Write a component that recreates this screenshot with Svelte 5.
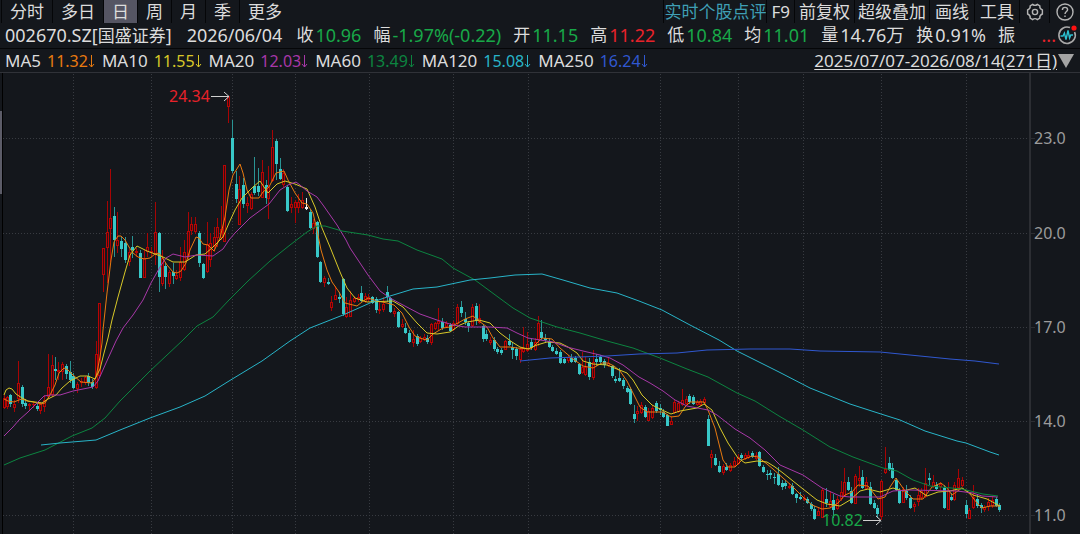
<script lang="ts">
  type Candle = [number, number, number, number, number, string];

  const periods = ['分时', '多日', '日', '周', '月', '季', '更多'];
  let period = $state('日');

  const quotes = [
    { label: '收', value: '10.96', tone: 'down' },
    { label: '幅', value: '-1.97%(-0.22)', tone: 'down' },
    { label: '开', value: '11.15', tone: 'down' },
    { label: '高', value: '11.22', tone: 'up' },
    { label: '低', value: '10.84', tone: 'down' },
    { label: '均', value: '11.01', tone: 'down' },
    { label: '量', value: '14.76万', tone: '' },
    { label: '换', value: '0.91%', tone: '' },
    { label: '振', value: '', tone: '' }
  ];

  const averages = [
    { name: 'MA5', value: '11.32', cls: 'ma5', points: '4,399 8,401 14,402 19,400 22,399 27,401 33,402 41,404 45,403 50,395 55,385 59,373 64,368 68,370 73,375 81,382 92,383 96,377 100,357 102,343 103,330 107,293 111,260 114,242 118,236 121,236 125,240 129,247 133,253 138,257 144,259 150,258 155,254 159,253 162,257 167,265 173,272 177,273 181,271 186,263 190,250 196,237 199,238 203,244 208,245 214,251 220,238 225,217 229,190 233,175 240,164 243,173 247,190 251,198 259,198 263,192 269,187 276,173 284,171 288,180 295,193 302,203 307,204 313,213 317,230 321,250 327,270 332,282 339,292 345,303 357,306 362,302 368,298 377,301 387,303 394,305 402,313 409,327 415,336 423,339 427,340 433,334 443,328 450,327 458,323 465,319 473,316 479,321 487,327 493,338 500,347 510,347 517,348 531,349 537,343 542,338 552,339 560,348 573,359 583,366 593,368 602,363 608,363 614,366 620,371 627,381 633,393 640,407 647,412 657,412 663,412 671,417 679,416 685,407 690,402 704,402 708,410 715,428 723,460 728,467 735,467 742,460 752,456 758,457 767,464 773,469 783,478 792,486 803,497 812,505 822,509 830,508 838,503 845,495 852,492 858,485 868,486 878,499 885,497 890,487 896,478 905,491 913,499 923,499 932,487 941,483 947,488 952,495 962,488 970,494 977,503 982,508 990,506 1000,506' },
    { name: 'MA10', value: '11.55', cls: 'ma10', points: '4,395 6,390 9,388 12,389 16,394 22,398 28,401 42,403 48,399 56,395 62,388 70,381 80,376 88,376 95,379 100,369 104,353 108,338 112,320 118,297 125,272 130,255 137,246 147,251 155,254 163,257 173,262 185,262 196,255 205,254 213,247 223,237 229,223 235,210 242,198 252,188 260,181 268,193 277,184 285,181 295,184 307,189 315,207 322,228 330,247 340,272 347,288 355,298 367,302 393,301 403,307 417,323 427,333 437,334 450,332 460,325 467,322 479,320 490,323 500,333 512,342 520,347 528,349 537,345 547,342 560,343 568,347 577,353 583,361 593,364 607,365 617,369 627,373 633,380 642,395 652,405 662,410 671,414 680,411 697,408 704,404 712,410 720,428 728,443 738,458 745,463 757,461 767,462 775,467 783,473 803,489 817,500 827,504 840,506 850,500 860,491 868,489 880,492 893,488 903,491 915,488 927,496 938,492 950,491 962,488 973,495 987,499 1000,506' },
    { name: 'MA20', value: '12.03', cls: 'ma20', points: '4,436 13,427 19,420 28,412 36,404 44,396 50,395 60,395 73,391 93,387 98,381 106,363 116,341 123,328 133,315 143,300 151,283 160,267 166,258 173,254 185,257 197,255 213,256 223,249 229,240 235,233 250,218 269,204 280,190 288,185 296,182 300,185 307,191 317,197 323,205 337,225 346,240 350,248 360,263 368,275 380,291 390,298 403,305 420,314 437,320 453,325 465,327 490,327 507,328 517,333 528,338 540,340 553,342 567,347 583,351 600,355 610,358 623,365 639,377 650,383 663,391 675,400 687,406 708,410 717,415 735,429 750,438 765,450 780,465 803,475 822,488 840,496 850,497 880,497 893,491 910,490 957,491 973,493 982,496 998,497' },
    { name: 'MA60', value: '13.49', cls: 'ma60', points: '4,465 20,458 45,450 72,436 92,428 105,418 120,401 150,371 183,340 197,326 213,317 229,300 248,281 270,261 290,245 307,232 317,226 325,226 342,231 368,235 383,239 398,241 417,250 442,259 453,268 475,280 498,297 513,308 530,318 557,327 580,333 607,341 633,348 660,358 687,369 708,377 737,393 755,401 779,416 803,430 830,447 853,457 883,468 897,471 913,480 930,486 962,489 983,494 998,496' },
    { name: 'MA120', value: '15.08', cls: 'ma120', points: '41,445 60,443 96,440 120,430 150,418 180,407 205,396 229,381 262,361 290,341 310,328 343,315 370,303 390,296 413,289 437,287 470,280 490,278 515,275 542,274 563,280 590,288 617,293 639,301 662,310 690,325 719,340 737,351 779,372 810,388 850,404 881,414 900,420 925,431 957,441 966,443 990,452 999,455' },
    { name: 'MA250', value: '16.24', cls: 'ma250', points: '520,361 550,358 607,356 639,354 677,353 707,350 750,349 790,349 820,351 880,352 910,355 950,359 975,361 999,364' }
  ];

  const priceTicks = [
    { label: '23.0', y: 138 },
    { label: '20.0', y: 233 },
    { label: '17.0', y: 327 },
    { label: '14.0', y: 421 },
    { label: '11.0', y: 515 }
  ];
  const monthLines = [73, 151, 232, 295, 369, 453, 528, 660, 738, 803, 881, 966];

  // x, high, body top, body bottom, low, kind (u = rise, d = fall, f = flat)
  const candles: Candle[] = [
    [4, 395, 398, 408, 409, 'u'], [7, 396, 397, 407, 409, 'u'], [10, 394, 395, 404, 407, 'd'], [14, 400, 404, 408, 412, 'u'],
    [18, 361, 383, 399, 403, 'u'], [22, 385, 387, 404, 407, 'd'], [25, 399, 403, 406, 409, 'd'], [29, 403, 404, 406, 411, 'u'],
    [33, 402, 404, 405, 408, 'u'], [37, 402, 406, 409, 411, 'd'], [40, 402, 404, 411, 414, 'u'], [44, 395, 400, 407, 412, 'u'],
    [48, 354, 387, 397, 399, 'u'], [52, 355, 365, 395, 397, 'u'], [55, 357, 369, 371, 380, 'd'], [58, 362, 370, 372, 380, 'u'],
    [62, 362, 364, 372, 380, 'u'], [66, 364, 366, 374, 379, 'd'], [70, 361, 372, 380, 383, 'd'], [73, 373, 376, 388, 389, 'd'],
    [77, 382, 384, 389, 393, 'u'], [81, 378, 381, 383, 387, 'u'], [85, 376, 377, 383, 385, 'u'], [88, 373, 376, 383, 386, 'd'],
    [92, 379, 382, 387, 389, 'd'], [96, 341, 354, 388, 389, 'u'], [99, 303, 303, 376, 378, 'u'], [103, 248, 248, 275, 292, 'u'],
    [107, 201, 232, 248, 283, 'u'], [110, 169, 218, 229, 262, 'u'], [114, 207, 216, 240, 257, 'd'], [117, 212, 240, 246, 253, 'u'],
    [121, 237, 241, 249, 257, 'd'], [125, 237, 243, 260, 263, 'd'], [129, 249, 252, 262, 266, 'u'], [132, 236, 247, 250, 258, 'd'],
    [136, 248, 251, 253, 257, 'u'], [140, 250, 253, 278, 278, 'd'], [144, 250, 258, 278, 278, 'u'], [147, 233, 247, 252, 257, 'u'],
    [151, 247, 251, 253, 256, 'u'], [155, 202, 232, 254, 265, 'u'], [159, 232, 233, 277, 292, 'd'], [162, 250, 258, 284, 286, 'u'],
    [165, 263, 266, 277, 289, 'd'], [169, 270, 272, 284, 287, 'u'], [173, 263, 272, 276, 284, 'd'], [176, 270, 275, 279, 280, 'u'],
    [180, 247, 262, 278, 281, 'u'], [184, 240, 252, 270, 271, 'u'], [188, 212, 231, 257, 260, 'u'], [191, 217, 224, 231, 235, 'u'],
    [195, 217, 224, 232, 234, 'u'], [199, 231, 233, 263, 267, 'd'], [203, 263, 264, 278, 279, 'd'], [207, 222, 244, 272, 273, 'u'],
    [210, 233, 243, 260, 267, 'u'], [214, 227, 237, 247, 252, 'u'], [217, 218, 227, 238, 247, 'u'], [221, 206, 229, 238, 240, 'u'],
    [224, 165, 165, 242, 242, 'u'], [228, 96, 96, 107, 123, 'u'], [232, 120, 138, 171, 173, 'd'], [236, 171, 184, 199, 203, 'd'],
    [239, 176, 189, 225, 225, 'u'], [243, 178, 185, 204, 208, 'd'], [247, 197, 203, 206, 213, 'u'], [251, 192, 194, 209, 210, 'u'],
    [254, 157, 186, 193, 195, 'd'], [258, 168, 186, 192, 196, 'd'], [262, 160, 172, 198, 198, 'u'], [266, 180, 185, 198, 204, 'd'],
    [268, 166, 187, 199, 219, 'u'], [272, 130, 147, 181, 182, 'u'], [276, 139, 141, 164, 180, 'd'], [280, 158, 169, 179, 180, 'd'],
    [283, 169, 173, 185, 187, 'u'], [287, 185, 187, 211, 212, 'd'], [291, 197, 204, 208, 213, 'u'], [295, 200, 202, 208, 223, 'u'],
    [298, 194, 202, 208, 213, 'u'], [302, 192, 200, 208, 209, 'u'], [306, 198, 207, 209, 210, 'f'], [310, 209, 212, 228, 229, 'd'],
    [313, 219, 223, 229, 234, 'u'], [317, 221, 222, 257, 258, 'd'], [320, 261, 262, 282, 283, 'd'], [324, 276, 278, 283, 287, 'u'],
    [328, 278, 282, 284, 285, 'd'], [331, 296, 302, 308, 311, 'u'], [335, 286, 295, 300, 300, 'u'], [339, 292, 297, 299, 303, 'd'],
    [343, 278, 279, 314, 316, 'd'], [346, 297, 307, 317, 318, 'u'], [350, 291, 300, 317, 317, 'u'], [354, 296, 298, 302, 303, 'u'],
    [358, 294, 297, 300, 302, 'u'], [361, 286, 293, 301, 302, 'd'], [365, 293, 296, 302, 303, 'u'], [368, 294, 297, 300, 302, 'u'],
    [372, 296, 297, 303, 304, 'd'], [376, 297, 299, 310, 313, 'd'], [379, 302, 309, 311, 314, 'u'], [383, 297, 304, 310, 312, 'u'],
    [387, 286, 292, 297, 302, 'd'], [390, 297, 298, 312, 313, 'd'], [394, 308, 311, 314, 317, 'u'], [398, 311, 312, 327, 328, 'd'],
    [402, 319, 324, 327, 328, 'u'], [405, 323, 328, 333, 334, 'd'], [409, 330, 333, 342, 343, 'd'], [413, 330, 339, 343, 347, 'u'],
    [417, 334, 336, 344, 346, 'd'], [420, 336, 338, 342, 343, 'u'], [424, 334, 337, 340, 341, 'u'], [427, 335, 338, 342, 344, 'd'],
    [431, 323, 324, 343, 345, 'u'], [435, 322, 323, 329, 330, 'u'], [438, 308, 321, 324, 330, 'u'], [442, 318, 322, 328, 330, 'd'],
    [446, 321, 323, 327, 328, 'u'], [450, 323, 325, 331, 332, 'd'], [453, 321, 323, 330, 331, 'u'], [457, 304, 307, 324, 325, 'u'],
    [461, 301, 307, 313, 317, 'd'], [465, 312, 319, 322, 325, 'd'], [468, 321, 323, 326, 332, 'd'], [472, 304, 307, 326, 327, 'u'],
    [476, 303, 306, 321, 325, 'd'], [479, 304, 318, 323, 324, 'u'], [483, 324, 326, 339, 342, 'd'], [486, 330, 334, 339, 341, 'd'],
    [490, 337, 340, 343, 345, 'u'], [494, 337, 340, 349, 351, 'd'], [497, 347, 349, 352, 354, 'd'], [501, 348, 350, 353, 355, 'd'],
    [505, 340, 341, 350, 350, 'u'], [509, 334, 341, 345, 346, 'd'], [512, 342, 347, 350, 359, 'd'], [516, 347, 349, 356, 360, 'd'],
    [520, 347, 349, 360, 363, 'u'], [523, 327, 348, 352, 353, 'u'], [527, 332, 344, 351, 352, 'u'], [531, 338, 342, 348, 350, 'd'],
    [535, 338, 342, 350, 351, 'u'], [538, 316, 323, 340, 346, 'u'], [541, 320, 332, 338, 340, 'd'], [545, 334, 338, 340, 343, 'd'],
    [549, 338, 341, 347, 348, 'd'], [552, 345, 347, 351, 352, 'd'], [556, 348, 351, 354, 355, 'd'], [560, 350, 352, 363, 364, 'd'],
    [564, 357, 359, 363, 364, 'd'], [568, 355, 357, 361, 363, 'u'], [571, 354, 358, 362, 363, 'd'], [575, 356, 358, 362, 363, 'd'],
    [579, 363, 364, 374, 375, 'd'], [582, 352, 367, 373, 374, 'u'], [585, 357, 367, 375, 376, 'u'], [589, 358, 362, 377, 380, 'd'],
    [593, 350, 362, 378, 380, 'u'], [596, 354, 359, 362, 366, 'd'], [600, 355, 357, 362, 364, 'd'], [604, 359, 361, 365, 368, 'd'],
    [608, 358, 363, 366, 367, 'u'], [612, 365, 366, 376, 378, 'd'], [615, 376, 379, 381, 383, 'd'], [619, 368, 378, 381, 382, 'd'],
    [623, 378, 380, 386, 389, 'd'], [627, 386, 388, 392, 393, 'd'], [630, 387, 389, 404, 405, 'd'], [634, 405, 414, 419, 423, 'd'],
    [637, 406, 411, 414, 421, 'u'], [641, 402, 405, 413, 414, 'u'], [645, 405, 407, 417, 418, 'd'], [648, 408, 411, 421, 421, 'u'],
    [652, 405, 408, 418, 419, 'u'], [656, 401, 403, 411, 413, 'd'], [660, 404, 408, 410, 415, 'd'], [663, 409, 412, 417, 418, 'd'],
    [667, 414, 415, 426, 426, 'd'], [671, 416, 421, 425, 425, 'u'], [674, 400, 402, 413, 414, 'u'], [678, 401, 403, 412, 413, 'u'],
    [682, 389, 400, 405, 406, 'u'], [686, 396, 399, 404, 406, 'u'], [689, 394, 396, 402, 404, 'd'], [693, 395, 397, 404, 405, 'd'],
    [697, 400, 402, 405, 406, 'u'], [700, 399, 401, 405, 406, 'u'], [704, 397, 399, 403, 404, 'u'], [708, 415, 419, 446, 446, 'd'],
    [711, 450, 454, 458, 468, 'u'], [715, 454, 458, 465, 466, 'd'], [719, 461, 466, 472, 473, 'd'], [723, 464, 466, 473, 475, 'u'],
    [726, 463, 467, 470, 471, 'd'], [730, 463, 465, 471, 472, 'u'], [734, 457, 461, 466, 467, 'u'], [738, 454, 457, 464, 465, 'u'],
    [741, 453, 455, 458, 461, 'd'], [745, 453, 455, 459, 460, 'u'], [748, 451, 455, 458, 459, 'u'], [752, 451, 453, 457, 458, 'd'],
    [756, 452, 455, 459, 460, 'u'], [759, 451, 452, 466, 467, 'd'], [763, 465, 467, 472, 473, 'd'], [767, 470, 474, 475, 480, 'd'],
    [770, 470, 473, 475, 479, 'd'], [774, 473, 477, 478, 484, 'd'], [778, 467, 474, 485, 486, 'd'], [782, 480, 483, 487, 490, 'd'],
    [785, 480, 483, 486, 489, 'd'], [789, 483, 486, 488, 489, 'u'], [792, 483, 486, 494, 495, 'd'], [796, 493, 494, 498, 503, 'd'],
    [800, 492, 497, 499, 500, 'd'], [804, 495, 498, 500, 501, 'u'], [807, 497, 499, 503, 504, 'd'], [811, 502, 504, 509, 511, 'd'],
    [814, 506, 509, 519, 520, 'd'], [818, 507, 511, 516, 516, 'u'], [822, 488, 490, 518, 518, 'u'], [826, 488, 499, 503, 507, 'd'],
    [830, 491, 501, 507, 508, 'u'], [833, 494, 500, 510, 518, 'd'], [837, 496, 499, 509, 510, 'u'], [841, 481, 492, 499, 501, 'u'],
    [844, 468, 482, 496, 497, 'u'], [848, 477, 482, 490, 491, 'd'], [851, 487, 491, 503, 504, 'd'], [855, 474, 476, 504, 504, 'u'],
    [859, 466, 478, 481, 487, 'u'], [862, 470, 477, 488, 489, 'd'], [866, 477, 482, 489, 490, 'u'], [870, 482, 487, 504, 505, 'd'],
    [874, 500, 503, 508, 509, 'd'], [877, 505, 508, 514, 518, 'd'], [881, 480, 481, 517, 520, 'u'], [885, 447, 469, 473, 474, 'u'],
    [889, 457, 463, 470, 471, 'd'], [892, 463, 468, 478, 479, 'd'], [896, 478, 480, 490, 491, 'd'], [899, 488, 490, 503, 504, 'd'],
    [903, 487, 489, 503, 503, 'u'], [906, 485, 491, 498, 500, 'd'], [910, 495, 498, 508, 509, 'd'], [914, 502, 504, 507, 512, 'u'],
    [918, 488, 495, 502, 506, 'u'], [921, 488, 491, 498, 500, 'u'], [925, 468, 483, 497, 498, 'u'], [929, 473, 478, 480, 485, 'd'],
    [933, 475, 482, 487, 488, 'u'], [936, 482, 485, 489, 490, 'd'], [940, 482, 484, 487, 490, 'u'], [944, 485, 488, 508, 509, 'd'],
    [948, 482, 490, 510, 510, 'u'], [951, 493, 497, 500, 501, 'd'], [954, 482, 485, 500, 501, 'u'], [958, 469, 478, 488, 490, 'u'],
    [962, 477, 480, 486, 487, 'u'], [966, 500, 505, 514, 518, 'd'], [969, 508, 510, 519, 519, 'u'], [973, 485, 497, 508, 509, 'u'],
    [977, 495, 499, 506, 508, 'd'], [981, 503, 505, 508, 513, 'd'], [984, 505, 507, 510, 512, 'u'], [988, 498, 502, 507, 511, 'u'],
    [992, 496, 500, 506, 508, 'u'], [996, 497, 499, 506, 507, 'd'], [999, 503, 505, 510, 512, 'd']
  ];
</script>

<div class="terminal">
  <nav class="toolbar">
    {#each periods as p}
      <button class="tab" class:active={p === period} onclick={() => (period = p)}>{p}</button>
    {/each}
    <span class="spacer"></span>
    <button class="tool review">实时个股点评</button>
    <button class="tool">F9</button>
    <button class="tool">前复权</button>
    <button class="tool tight">超级叠加</button>
    <button class="tool wide">画线</button>
    <button class="tool wide">工具</button>
    <button class="tool icon" aria-label="设置">
      <svg width="20" height="20" viewBox="0 0 20 20">
        <path d="M7.6 2.4 Q10 4.4 12.4 2.4 L14.8 3.8 Q14.4 6.8 17.4 8 V12 Q14.4 13.2 14.8 16.2 L12.4 17.6 Q10 15.6 7.6 17.6 L5.2 16.2 Q5.6 13.2 2.6 12 V8 Q5.6 6.8 5.2 3.8 Z" />
        <circle cx="10" cy="10" r="2.6" />
      </svg>
    </button>
    <button class="tool icon" aria-label="帮助">
      <svg width="20" height="20" viewBox="0 0 20 20">
        <circle cx="10" cy="10" r="8" />
        <path d="M7.4 8 Q7.4 5.4 10 5.4 T12.6 7.8 C12.6 9.6 10 9.6 10 12 M10 13.6 V15" />
      </svg>
    </button>
  </nav>

  <div class="quote">
    <span class="code">002670.SZ[<span class="cjk">国盛证券</span>]</span>
    <span class="date">2026/06/04</span>
    {#each quotes as q}
      <span class="item"><span class="cjk">{q.label}</span><span class={q.tone}>{q.value}</span></span>
    {/each}
    <span class="more">...</span>
    <svg class="pulse" width="22" height="22" viewBox="0 0 22 22">
      <path class="ring" d="M14 3.6 A8.2 8.2 0 1 0 18.6 8" />
      <path class="beat" d="M4.5 12 H7 L8.4 9 L10 15.5 L12 6.5 L13.6 14 L14.8 11 H17" />
      <circle class="dot" cx="18" cy="4" r="2.6" />
    </svg>
  </div>

  <div class="averages">
    {#each averages as ma}
      <span class="ma">
        {ma.name}
        <span class="num {ma.cls}">{ma.value}<svg class="arrow" width="7" height="16" viewBox="0 0 7 16"><path d="M3.5 2 V14 M1 11 L3.5 14 L6 11" /></svg></span>
      </span>
    {/each}
    <span class="spacer"></span>
    <button class="range"><span>2025/07/07-2026/08/14(271日)</span><svg width="18" height="16" viewBox="0 0 18 16"><path d="M1 1 H17 L9 15 Z" /></svg></button>
  </div>

  <svg class="chart" viewBox="0 73 1080 461">
    <rect class="edge" x="2" y="73" width="1" height="461" />
    <rect class="thumb" x="0" y="111" width="2" height="83" />

    <g class="grid">
      {#each priceTicks as t}
        <path d="M3 {t.y + 0.5} H1030" />
      {/each}
      {#each monthLines as x}
        <path d="M{x + 0.5} 74 V534" />
      {/each}
    </g>
    <rect class="axis" x="1029" y="73" width="2" height="461" />
    {#each priceTicks as t}
      <rect class="axis" x="1031" y={t.y} width="4" height="1" />
      <text class="price" x="1034" y={t.y + 6}>{t.label}</text>
    {/each}

    <g class="candles">
      {#each candles as [x, high, top, bottom, low, kind]}
        <rect class="wick {kind}" {x} y={high} width="1" height={low - high} />
        <rect class="body {kind}" x={x - 1} y={top} width="3" height={bottom - top} />
        {#if kind === 'u' && bottom - top > 2}
          <rect class="hollow" {x} y={top + 1} width="1" height={bottom - top - 2} />
        {/if}
      {/each}
    </g>

    {#each averages as ma}
      <polyline class="line {ma.cls}" points={ma.points} />
    {/each}

    <text class="high" x="169" y="102">24.34</text>
    <path class="pointer" d="M211 96.5 H229 M224 92 L229 96.5 L224 101" />
    <text class="low" x="822" y="526">10.82</text>
    <path class="pointer" d="M863 520.5 H881 M876 516 L881 520.5 L876 525" />
  </svg>
</div>

<style>
:global(body) {
  margin: 0;
  background: #14171c;
}

.terminal {
  background: #14171c;
  color: #dcdcdc;
  font-family: 'Noto Sans', 'Noto Sans CJK SC', sans-serif;
  font-size: 18px;
  white-space: nowrap;
  overflow: hidden;
}

button {
  margin: 0;
  border: 0;
  background: none;
  color: inherit;
  font: inherit;
  cursor: pointer;
}

.spacer {
  flex: 1;
}

.cjk {
  font-size: 17px;
}

/* toolbar */
.toolbar {
  display: flex;
  height: 24px;
  padding: 0 1px;
  font-size: 17px;
  line-height: 24px;
}

.tab {
  padding: 0 8px;
  border-left: 1px solid #050608;
  height: 23px;
}

.tab.active {
  background: #555563;
}

.tool {
  padding: 0 4px;
  border-left: 1px solid #050608;
  height: 23px;
}

.tool.review {
  padding: 0;
  color: #3f9fb5;
}

.tool.tight {
  padding: 0 3px;
}

.tool.wide {
  padding: 0 5px;
}

.tool.icon {
  display: flex;
  width: 30px;
  align-items: center;
  justify-content: center;
}

.tool.icon svg {
  flex: none;
  fill: none;
  stroke: #b4b4b4;
  stroke-width: 1.4;
}

/* quote row */
.quote {
  display: flex;
  align-items: center;
  gap: 12px;
  box-sizing: border-box;
  height: 25px;
  padding: 0 2px 2px 5px;
  border-bottom: 1px solid #050608;
  line-height: 22px;
}

.code {
  margin-right: 3px;
}

.date {
  margin-right: 2px;
}

.item {
  display: flex;
  gap: 2px;
}

.up {
  color: #e8222a;
}

.down {
  color: #18a848;
}

.more {
  margin-left: auto;
  margin-right: -12px;
  color: #e8222a;
}

.pulse {
  flex: none;
  fill: none;
}

.ring {
  stroke: #a8a8a8;
  stroke-width: 1.6;
}

.beat {
  stroke: #2cc0d0;
  stroke-width: 1.4;
}

.dot {
  fill: #ff1010;
}

/* moving averages */
.averages {
  display: flex;
  align-items: center;
  gap: 7px;
  box-sizing: border-box;
  height: 24px;
  padding: 1px 5px 0;
  border-bottom: 1px solid #303238;
  font-size: 17px;
  line-height: 22px;
}

.ma {
  display: flex;
  gap: 6px;
}

.num {
  display: flex;
  align-items: center;
  font-size: 16px;
}

.arrow path {
  fill: none;
  stroke: currentColor;
}

.range {
  display: flex;
  align-items: center;
  padding: 0;
}

.range span {
  text-decoration: underline;
  text-underline-offset: 2px;
}

.range svg {
  fill: #a4a4a4;
}

.ma5 { color: #e87a10; }
.ma10 { color: #d8c828; }
.ma20 { color: #a838a8; }
.ma60 { color: #0c8440; }
.ma120 { color: #28b4c8; }
.ma250 { color: #3058d0; }

/* chart */
.chart {
  display: block;
  width: 100%;
  height: auto;
}

.edge {
  fill: #000;
}

.thumb {
  fill: #5c5c68;
}

.grid {
  fill: none;
  stroke: #383b41;
  stroke-dasharray: 1 2;
}

.axis {
  fill: #2c2e33;
}

.price {
  fill: #9c9c9c;
  font-size: 16px;
}

.candles {
  shape-rendering: crispEdges;
}

.wick.u { fill: #a80404; }
.wick.d { fill: #2a9494; }
.body.u { fill: #b80404; }
.body.d { fill: #38c8c8; }
.wick.f,
.body.f { fill: #f0f0f0; }

.hollow {
  fill: #380c10;
}

.line {
  fill: none;
  stroke: currentColor;
  stroke-width: 1;
}

.pointer {
  fill: none;
  stroke: #d0d0d0;
}

.high {
  fill: #e8222a;
  font-size: 16px;
}

.low {
  fill: #18a848;
  font-size: 16px;
}
</style>
